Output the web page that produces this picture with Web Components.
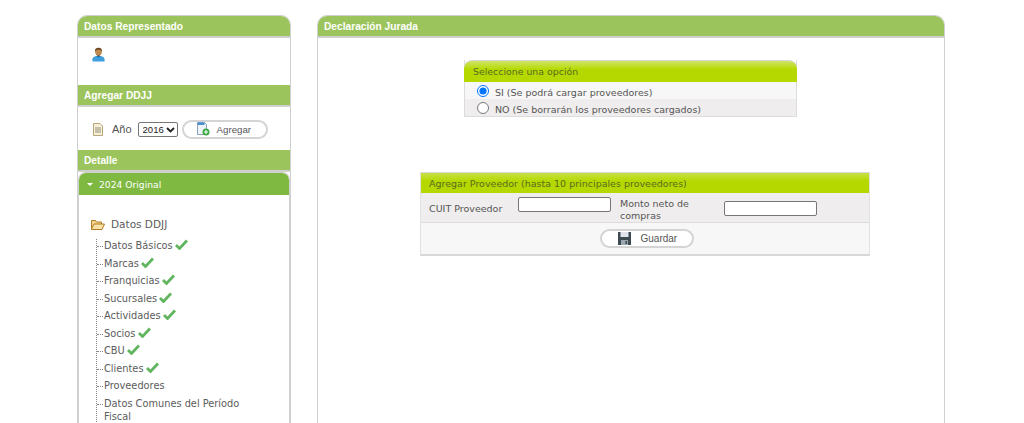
<!DOCTYPE html>
<html lang="es">
<head>
<meta charset="utf-8">
<title>Declaración Jurada</title>
<style>
  html, body { margin: 0; height: 423px; overflow: hidden; background: #fff; }
</style>
</head>
<body>
<app-page>
  <side-panel slot="side">
    <panel-head>Datos Representado</panel-head>
    <div style="height:47px;padding:9px 0 0 14px;box-sizing:border-box">
      <svg width="13" height="15" viewBox="0 0 14 16" style="display:block">
        <path d="M0.5 15.5v-2.5c0-2 2-3 4-3.500h5c2 .5 4 1.500 4 3.500v2.500z" fill="#3f9fdc"/>
        <path d="M5 9.500l2 2 2-2z" fill="#1d6aa8"/>
        <circle cx="7" cy="5" r="3.700" fill="#c08a4f"/>
        <path d="M3.200 5C3 1.800 5 .8 7 .8s4 1 3.800 4.200c-.8-1.500-2-2-3.800-2S4 3.500 3.200 5z" fill="#6e4620"/>
        <path d="M4.500 7.500c1 1.400 4 1.400 5 0-.3 1.600-1.300 2-2.500 2s-2.200-.4-2.500-2z" fill="#6e4620"/>
      </svg>
    </div>
    <panel-head>Agregar DDJJ</panel-head>
    <year-form></year-form>
    <panel-head>Detalle</panel-head>
    <tree-box title="2024 Original">
      <tree-root label="Datos DDJJ">
        <tree-leaf done>Datos Básicos</tree-leaf>
        <tree-leaf done>Marcas</tree-leaf>
        <tree-leaf done>Franquicias</tree-leaf>
        <tree-leaf done>Sucursales</tree-leaf>
        <tree-leaf done>Actividades</tree-leaf>
        <tree-leaf done>Socios</tree-leaf>
        <tree-leaf done>CBU</tree-leaf>
        <tree-leaf done>Clientes</tree-leaf>
        <tree-leaf>Proveedores</tree-leaf>
        <tree-leaf>Datos Comunes del Período Fiscal</tree-leaf>
      </tree-root>
    </tree-box>
  </side-panel>
  <main-panel slot="main">
    <panel-head style="padding-left:6px">Declaración Jurada</panel-head>
    <option-box></option-box>
    <supplier-form></supplier-form>
  </main-panel>
</app-page>

<script>
function shell(css, html) {
  return `<style>${css}</style>${html}`;
}

class AppPage extends HTMLElement {
  constructor() {
    super();
    this.attachShadow({ mode: 'open' }).innerHTML = shell(`
      :host { display: flex; gap: 26px; padding: 15px 0 0 77px; height: 408px; overflow: hidden; align-items: flex-start; }
    `, `<slot name="side"></slot><slot name="main"></slot>`);
  }
}

class PanelHead extends HTMLElement {
  constructor() {
    super();
    this.attachShadow({ mode: 'open' }).innerHTML = shell(`
      :host {
        display: block; height: 22px; box-sizing: border-box;
        background: #9bc45c; border-bottom: 2px solid #cfcfcf;
        color: #fff; font: bold 10.2px/21px "Liberation Sans", Arial, sans-serif;
        padding-left: 6px;
      }
    `, `<slot></slot>`);
  }
}

class SidePanel extends HTMLElement {
  constructor() {
    super();
    this.attachShadow({ mode: 'open' }).innerHTML = shell(`
      :host {
        display: block; width: 214px; box-sizing: border-box; height: 408px;
        border: 1px solid #d0d0d0; border-bottom: 0;
        border-radius: 10px 10px 0 0; overflow: hidden;
      }
    `, `<slot></slot>`);
  }
}

class MainPanel extends HTMLElement {
  constructor() {
    super();
    this.attachShadow({ mode: 'open' }).innerHTML = shell(`
      :host {
        display: block; width: 628px; box-sizing: border-box; height: 408px;
        border: 1px solid #d0d0d0; border-bottom: 0;
        border-radius: 10px 10px 0 0; overflow: hidden;
      }
    `, `<slot></slot>`);
  }
}

class PillButton extends HTMLElement {
  constructor() {
    super();
    this.attachShadow({ mode: 'open' }).innerHTML = shell(`
      :host {
        display: inline-flex; align-items: center; box-sizing: border-box;
        border: 2px solid #d4d4d4; border-radius: 10px; background: #fff;
        height: 19px; color: #555; font: 9.700px "Liberation Sans", Arial, sans-serif;
      }
    `, `<slot></slot>`);
  }
}

class YearForm extends HTMLElement {
  constructor() {
    super();
    this.attachShadow({ mode: 'open' }).innerHTML = shell(`
      :host {
        display: flex; align-items: center; height: 43px; box-sizing: border-box;
        padding: 1px 0 0 15px; color: #555; font: 11px "Liberation Sans", Arial, sans-serif;
      }
      .year { margin-left: 9px; }
      .pick { position: relative; display: block; margin-left: 6px; width: 40px; height: 15px; }
      .pick svg { position: absolute; right: 3px; top: 5px; pointer-events: none; }
      select {
        display: block; appearance: none; width: 40px; height: 15px; margin: 0; padding: 0 0 0 4px; box-sizing: border-box;
        font: 9.500px "Liberation Sans", Arial, sans-serif; color: #222;
        background: #fff; border: 1px solid #767676; border-radius: 2px;
      }
      pill-button { margin-left: 4px; width: 86px; }
      .lbl { margin-left: 7px; }
      .ic { margin-left: 12px; }
    `, `
      <svg width="10" height="13" viewBox="0 0 10 13">
        <path d="M.5.500h6.500l2.500 2.500v9.500H.5z" fill="#f6efd9" stroke="#b9a678"/>
        <path d="M2 5h6M2 7h6M2 9h6" stroke="#9a8f7a"/>
      </svg>
      <span class="year">Año</span>
      <span class="pick">
        <select><option>2016</option></select>
        <svg width="9" height="6" viewBox="0 0 9 6"><path d="M1 1l3.500 3.500L8 1" fill="none" stroke="#222" stroke-width="1.800"/></svg>
      </span>
      <pill-button>
        <svg class="ic" width="14" height="14" viewBox="0 0 14 14">
          <path d="M1.500.500h7l2 2v10h-9z" fill="#eef3f8" stroke="#8aa4bd"/>
          <path d="M1.500 .500h7v2.500h-7z" fill="#4b8fd0"/>
          <circle cx="10" cy="10" r="3.500" fill="#39a845"/>
          <path d="M10 8v4M8 10h4" stroke="#fff"/>
        </svg>
        <span class="lbl">Agregar</span>
      </pill-button>
    `);
  }
}

class TreeBox extends HTMLElement {
  constructor() {
    super();
    this.attachShadow({ mode: 'open' }).innerHTML = shell(`
      :host {
        display: block; border: 1px solid #d0d0d0; border-bottom: 0; border-left-width: 1px;
        border-radius: 8px 8px 0 0; overflow: hidden; height: 300px;
      }
      .head {
        height: 22px; box-sizing: border-box; padding: 1px 0 0 8px; background: #80b942; color: #fff;
        font: 9.200px/21px "DejaVu Sans", Verdana, sans-serif;
        display: flex; align-items: center; gap: 6px;
      }
      .tri { width: 0; height: 0; border: 3px solid transparent; border-top: 3px solid #fff; border-bottom: 0; }
      .body { padding: 21px 0 0 12px; }
    `, `
      <div class="head"><span class="tri"></span><span id="t"></span></div>
      <div class="body"><slot></slot></div>
    `);
    this.shadowRoot.getElementById('t').textContent = this.getAttribute('title');
  }
}

class TreeRoot extends HTMLElement {
  constructor() {
    super();
    this.attachShadow({ mode: 'open' }).innerHTML = shell(`
      :host { display: block; color: #5c5c5c; font: 9.800px "DejaVu Sans", Verdana, sans-serif; }
      .root { display: flex; align-items: center; gap: 6px; height: 16px; font-size: 10.500px; }
      .kids { margin: 7px 0 0 5px; border-left: 1px dotted #888; }
    `, `
      <div class="root">
        <svg width="14" height="11" viewBox="0 0 14 11">
          <path d="M.5 10V1.500h4l1 1.500h5v2" fill="#f4d48a" stroke="#b07c24"/>
          <path d="M.5 10l2.500-5h10.500l-2.500 5.500H.5z" fill="#f9e2a8" stroke="#b07c24"/>
        </svg>
        <span id="l"></span>
      </div>
      <div class="kids"><slot></slot></div>
    `);
    this.shadowRoot.getElementById('l').textContent = this.getAttribute('label');
  }
}

class TreeLeaf extends HTMLElement {
  constructor() {
    super();
    this.attachShadow({ mode: 'open' }).innerHTML = shell(`
      :host { display: block; position: relative; padding: 0 40px 0 7px; line-height: 13.500px; margin-bottom: 4px; }
      :host::before { content: ""; position: absolute; left: 0; top: 7px; width: 6px; border-top: 1px dotted #888; }
      svg { display: none; vertical-align: -1px; margin-left: -1px; }
      :host([done]) svg { display: inline; }
    `, `
      <slot></slot> <svg width="13" height="11" viewBox="0 0 13 11">
        <path d="M1 6l3.500 3.500L12 1.500" fill="none" stroke="#62b55f" stroke-width="2.800"/>
      </svg>
    `);
  }
}

class OptionBox extends HTMLElement {
  constructor() {
    super();
    this.attachShadow({ mode: 'open' }).innerHTML = shell(`
      :host {
        display: block; width: 333px; margin: 22px 0 0 146px; box-sizing: border-box;
        border: 1px solid #dcdcdc; border-top: 0; color: #555;
        font: 9.500px "DejaVu Sans", Verdana, sans-serif;
      }
      .head {
        height: 22px; box-sizing: border-box; line-height: 21px; padding-left: 9px; color: #5a6b20; font-size: 9.400px;
        margin: 0 -1px; border-top: 1px solid #d8d8d8;
        background: linear-gradient(#cfe56a, #b5d900 40%); border-radius: 8px 8px 0 0;
      }
      label { display: flex; align-items: center; height: 17px; padding-left: 12px; }
      label span { padding-top: 4px; }
      .a { background: #f7f7f7; }
      .b { background: #efeded; }
      input { margin: 0 6px 0 0; width: 12px; height: 12px; }
    `, `
      <div class="head">Seleccione una opción</div>
      <label class="a"><input type="radio" name="o" checked><span>SI (Se podrá cargar proveedores)</span></label>
      <label class="b"><input type="radio" name="o"><span>NO (Se borrarán los proveedores cargados)</span></label>
    `);
  }
}

class SupplierForm extends HTMLElement {
  constructor() {
    super();
    this.attachShadow({ mode: 'open' }).innerHTML = shell(`
      :host {
        display: block; width: 450px; margin: 55px 0 0 102px; box-sizing: border-box;
        border: 1px solid #e2e2e2; border-top: 0; border-bottom: 2px solid #d8d8d8; color: #555;
        font: 9.500px/12px "DejaVu Sans", Verdana, sans-serif;
      }
      .head {
        height: 21px; box-sizing: border-box; line-height: 21px; padding-left: 8px; color: #5a6b20;
        border-top: 1px solid #d8d8d8;
        background: linear-gradient(#c6e04a, #b5d900 40%);
      }
      .row {
        display: grid; grid-template-columns: 89px 93px 9px 104px 93px;
        height: 30px; background: #efeded; padding-left: 8px; border-bottom: 1px solid #ddd;
        box-sizing: border-box; align-items: center;
      }
      input {
        grid-row: 1; width: 93px; height: 15px; box-sizing: border-box; margin: 0;
        border: 1px solid #767676; border-radius: 2px; padding: 0; background: #fff;
      }
      .a1 { grid-column: 1; padding-top: 2px; }
      .i1 { grid-column: 2; margin-bottom: 7px; }
      .a2 { grid-column: 4; padding-top: 4px; }
      .i2 { grid-column: 5; margin-top: 1px; }
      .foot { display: flex; justify-content: center; align-items: center; height: 31px; padding-left: 3px; box-sizing: border-box; background: #f7f7f7; }
      pill-button { width: 94px; height: 19px; font-size: 10px; }
      pill-button svg { margin-left: 16px; }
      pill-button span { margin-left: 10px; }
    `, `
      <div class="head">Agregar Proveedor (hasta 10 principales proveedores)</div>
      <div class="row">
        <span class="a1">CUIT Proveedor</span>
        <input class="i1" type="text">
        <span class="a2">Monto neto de compras</span>
        <input class="i2" type="text">
      </div>
      <div class="foot">
        <pill-button>
          <svg width="13" height="13" viewBox="0 0 13 13">
            <path d="M0 0h13v13H0z" fill="#3d4a52"/>
            <path d="M2.500 0h8v5h-8z" fill="#dfe5ea"/>
            <path d="M3 8h7v5H3z" fill="#9aa5ad"/>
            <path d="M7.500 9h1.500v3H7.500z" fill="#3d4a52"/>
          </svg>
          <span>Guardar</span>
        </pill-button>
      </div>
    `);
  }
}

customElements.define('app-page', AppPage);
customElements.define('panel-head', PanelHead);
customElements.define('side-panel', SidePanel);
customElements.define('main-panel', MainPanel);
customElements.define('pill-button', PillButton);
customElements.define('year-form', YearForm);
customElements.define('tree-box', TreeBox);
customElements.define('tree-root', TreeRoot);
customElements.define('tree-leaf', TreeLeaf);
customElements.define('option-box', OptionBox);
customElements.define('supplier-form', SupplierForm);
</script>
</body>
</html>
